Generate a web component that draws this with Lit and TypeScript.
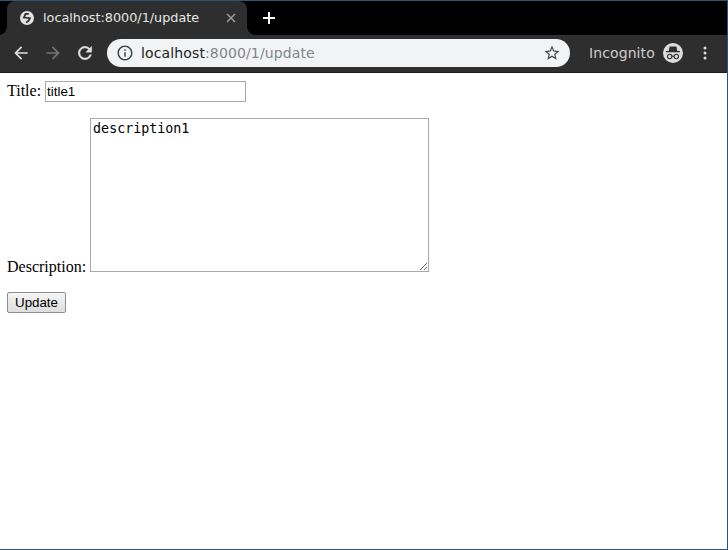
import { LitElement, html, css } from "lit";
import { customElement } from "lit/decorators.js";

@customElement("app-root")
export class AppRoot extends LitElement {
  static styles = css`
    :host { display: block; width: 728px; height: 550px; box-sizing: border-box; overflow: hidden; background: #fff;
      border-top: 1px solid #2a5478; border-right: 1px solid #2a5478; border-bottom: 1px solid #2a5478; }
    .tabs { height: 34px; background: #000; display: flex; align-items: flex-end; padding-left: 7px; }
    .tab { width: 240px; height: 34px; background: #2e2e2e; border-radius: 8px 8px 0 0; display: flex; align-items: center; box-sizing: border-box; padding: 0 11px 1px 13px; color: #e8e8e8; font: 12.8px "DejaVu Sans", sans-serif; position: relative; }
    .tab::before, .tab::after { content: ""; position: absolute; bottom: 0; width: 8px; height: 8px; }
    .tab::before { left: -8px; background: radial-gradient(circle at 0 0, #000 7.5px, #2e2e2e 8px); }
    .tab::after { right: -8px; background: radial-gradient(circle at 100% 0, #000 7.5px, #2e2e2e 8px); }
    .tab .title { margin-left: 9px; flex: 1; white-space: nowrap; }
    .plus { margin-left: 16px; margin-bottom: 11px; display: block; }
    .bar { height: 38px; background: #2e2e2e; display: flex; align-items: center; padding-bottom: 2px; box-sizing: border-box; border-bottom: 1px solid #1c1c1c; }
    .nav { display: block; }
    .nav.back { margin-left: 11px; }
    .nav.fwd { margin-left: 12px; }
    .nav.reload { margin-left: 12px; }
    .omni { margin-left: 12px; width: 463px; height: 28px; background: #f1f3f4; border-radius: 14px; display: flex; align-items: center; box-sizing: border-box; padding: 0 9px 0 9px; font: 14px "DejaVu Sans", sans-serif; color: #222; }
    .url { margin-left: 7px; flex: 1; white-space: nowrap; letter-spacing: 0.13px; }
    .url span { color: #80868b; }
    .inc { margin-left: 19px; color: #cfcfcf; font: 14px "DejaVu Sans", sans-serif; letter-spacing: 0.1px; white-space: nowrap; }
    .incicon { margin-left: 8px; display: block; }
    .dots { margin-left: 20px; display: block; }
    .page { padding: 8px 7px; font: 16px "Liberation Serif", serif; color: #000; }
    .page p { margin: 0 0 16px; }
    input { box-sizing: border-box; width: 201px; height: 21px; padding: 1px; margin: 0; border: 1px solid #a9a9a9; font: 13.333px "Liberation Sans", sans-serif; color: #000; background: #fff; outline: none; }
    textarea { box-sizing: border-box; width: 339px; height: 154px; padding: 2px; margin: 0; border: 1px solid #a9a9a9; font: 13.333px "DejaVu Sans Mono", monospace; color: #000; background: #fff; outline: none; }
    button { box-sizing: border-box; width: 59px; height: 21px; padding: 1px 6px; margin: 0; border: 1px solid #8f8f8f; border-radius: 2px; background: linear-gradient(#f6f6f6, #e8e8e8 50%, #dedede); font: 13.333px "Liberation Sans", sans-serif; color: #000; }
  `;

  render() {
    return html`
      <div class="tabs">
        <div class="tab">
          <svg width="14" height="14" viewBox="0 0 14 14"><circle cx="7" cy="7" r="7" fill="#e3e3e3"/><path d="M8.8 2.8H5.6L3.9 6.6L9.9 7.2L8.4 10L6.2 11.6" fill="none" stroke="#2e2e2e" stroke-width="1.8"/></svg>
          <span class="title">localhost:8000/1/update</span>
          <svg width="10" height="10" viewBox="0 0 10 10"><path d="M1 1 L9 9 M9 1 L1 9" stroke="#9b9b9b" stroke-width="1.5"/></svg>
        </div>
        <svg class="plus" width="12" height="12" viewBox="0 0 12 12"><path d="M6 0V12M0 6H12" stroke="#fff" stroke-width="2"/></svg>
      </div>
      <div class="bar">
        <svg class="nav back" width="20" height="20" viewBox="0 0 24 24"><path d="M20 11H7.83l5.59-5.59L12 4l-8 8 8 8 1.41-1.41L7.83 13H20v-2z" fill="#e0e0e0"/></svg>
        <svg class="nav fwd" width="20" height="20" viewBox="0 0 24 24"><path d="M12 4l-1.41 1.41L16.17 11H4v2h12.17l-5.58 5.59L12 20l8-8z" fill="#747474"/></svg>
        <svg class="nav reload" width="20" height="20" viewBox="0 0 24 24"><path d="M17.65 6.35C16.2 4.9 14.21 4 12 4c-4.42 0-7.99 3.58-7.99 8s3.57 8 7.99 8c3.73 0 6.84-2.55 7.73-6h-2.08c-.82 2.33-3.04 4-5.65 4-3.31 0-6-2.69-6-6s2.69-6 6-6c1.66 0 3.14.69 4.22 1.78L13 11h7V4l-2.35 2.35z" fill="#e0e0e0" stroke="#e0e0e0" stroke-width="0.5"/></svg>
        <div class="omni">
          <svg width="18" height="18" viewBox="0 0 24 24"><path d="M11 7h2v2h-2zm0 4h2v6h-2zm1-9C6.48 2 2 6.48 2 12s4.48 10 10 10 10-4.48 10-10S17.52 2 12 2zm0 18c-4.41 0-8-3.59-8-8s3.59-8 8-8 8 3.59 8 8-3.59 8-8 8z" fill="#444"/></svg>
          <div class="url">localhost<span>:8000/1/update</span></div>
          <svg width="18" height="18" viewBox="0 0 24 24"><path d="M22 9.24l-7.19-.62L12 2 9.19 8.63 2 9.24l5.46 4.73L5.82 21 12 17.27 18.18 21l-1.63-7.03L22 9.24zM12 15.4l-3.76 2.27 1-4.28-3.32-2.88 4.38-.38L12 6.1l1.71 4.04 4.38.38-3.32 2.88 1 4.28L12 15.4z" fill="#444"/></svg>
        </div>
        <div class="inc">Incognito</div>
        <svg class="incicon" width="20" height="20" viewBox="0 0 20 20"><circle cx="10" cy="10" r="10" fill="#dcdcdc"/><path d="M6.6 3.4H13.4L14.3 8H17V9.2H3V8H5.7Z" fill="#2e2e2e"/><circle cx="6.7" cy="13.5" r="2.2" fill="none" stroke="#2e2e2e" stroke-width="1.1"/><circle cx="13.3" cy="13.5" r="2.2" fill="none" stroke="#2e2e2e" stroke-width="1.1"/><path d="M8.9 13.2H11.1" stroke="#2e2e2e"/></svg>
        <svg class="dots" width="4" height="14" viewBox="0 0 4 14"><circle cx="2" cy="2" r="1.5" fill="#dcdcdc"/><circle cx="2" cy="7" r="1.5" fill="#dcdcdc"/><circle cx="2" cy="12" r="1.5" fill="#dcdcdc"/></svg>
      </div>
      <div class="page">
        <form>
          <p>Title: <input type="text" .value=${"title1"} /></p>
          <p>Description: <textarea .value=${"description1"}></textarea></p>
          <p><button type="button">Update</button></p>
        </form>
      </div>
    `;
  }
}
